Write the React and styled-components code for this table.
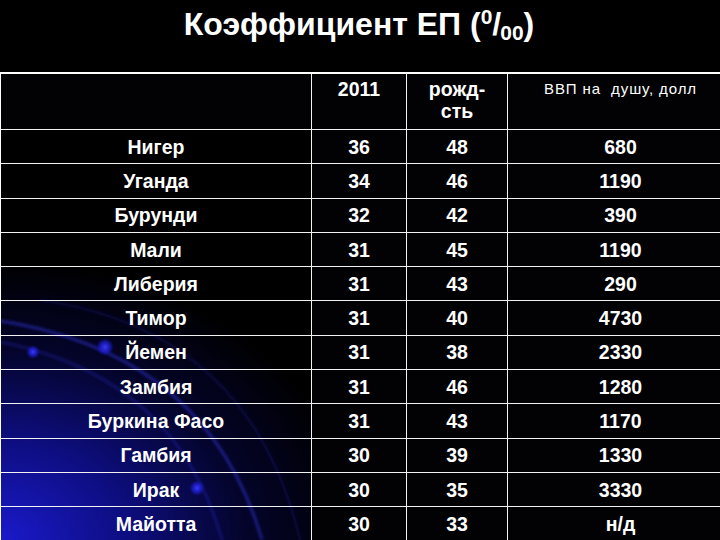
import React from 'react'
import styled, { createGlobalStyle } from 'styled-components'

const GlobalStyle = createGlobalStyle`
  html, body {
    margin: 0;
    padding: 0;
    background: #000;
  }
  body {
    font-family: "Liberation Sans", Arial, sans-serif;
    color: #fff;
  }
`

const Slide = styled.div`
  position: relative;
  width: 720px;
  height: 540px;
  overflow: hidden;
  background:
    radial-gradient(ellipse 360px 280px at 0% 100%, rgba(26, 26, 204, 1) 0%, rgba(16, 16, 152, 0.85) 35%, rgba(8, 8, 86, 0.5) 68%, rgba(0, 0, 0, 0) 100%),
    #000;
`

const Backdrop = styled.svg`
  position: absolute;
  left: 0;
  top: 0;
  width: 720px;
  height: 540px;
  pointer-events: none;
`

const Content = styled.div`
  position: relative;
  display: flex;
  flex-direction: column;
`

const Title = styled.h1`
  margin: 0;
  height: 72px;
  padding-top: 6px;
  box-sizing: border-box;
  text-align: center;
  font-size: 32px;
  font-weight: 700;
  line-height: 36px;
  padding-right: 2px;

  sup, sub {
    font-size: 21px;
    line-height: 0;
    position: relative;
    vertical-align: baseline;
  }
  sup {
    top: -11px;
  }
  sub {
    top: 5px;
    margin-left: -1px;
  }
`

const Grid = styled.div`
  display: grid;
  grid-template-columns: 311px 95px 101px 226px;
  grid-template-rows: 56px;
  grid-auto-rows: 34.3px;
  width: 733px;
  border-top: 2px solid #fff;
  border-left: 1px solid #fff;
`

const Cell = styled.div`
  box-sizing: border-box;
  border-right: 1px solid #f2f2f2;
  border-bottom: 1px solid #f2f2f2;
  display: flex;
  justify-content: center;
  align-items: ${({ $head }) => ($head ? 'flex-start' : 'center')};
  padding-top: ${({ $head }) => ($head ? '4px' : '0')};
  text-align: center;
  font-size: ${({ $small }) => ($small ? '15px' : '19.5px')};
  font-weight: ${({ $small }) => ($small ? 400 : 700)};
  letter-spacing: ${({ $small }) => ($small ? '0.9px' : '0')};
  line-height: 22px;
  white-space: pre;
  background: ${({ $dark }) => ($dark ? '#020204' : 'transparent')};
`

const rows = [
  ['Нигер', 36, 48, '680'],
  ['Уганда', 34, 46, '1190'],
  ['Бурунди', 32, 42, '390'],
  ['Мали', 31, 45, '1190'],
  ['Либерия', 31, 43, '290'],
  ['Тимор', 31, 40, '4730'],
  ['Йемен', 31, 38, '2330'],
  ['Замбия', 31, 46, '1280'],
  ['Буркина Фасо', 31, 43, '1170'],
  ['Гамбия', 30, 39, '1330'],
  ['Ирак', 30, 35, '3330'],
  ['Майотта', 30, 33, 'н/д'],
]

const Orbits = () => (
  <Backdrop viewBox="0 0 720 540">
    <defs>
      <filter id="glow" x="-50%" y="-50%" width="200%" height="200%">
        <feGaussianBlur stdDeviation="1.6" />
      </filter>
      <radialGradient id="dot">
        <stop offset="0%" stopColor="#3a3aff" stopOpacity="1" />
        <stop offset="60%" stopColor="#1c1cd0" stopOpacity="0.7" />
        <stop offset="100%" stopColor="#1010a0" stopOpacity="0" />
      </radialGradient>
    </defs>
    <g fill="none" filter="url(#glow)">
      <path d="M -20 318 Q 205 345 262 540" stroke="#3030dc" strokeOpacity="0.65" strokeWidth="2.4" />
      <path d="M -10 340 Q 175 372 222 540" stroke="#2a2ac4" strokeOpacity="0.55" strokeWidth="1.9" />
      <path d="M 40 300 Q 250 330 300 540" stroke="#2222b4" strokeOpacity="0.4" strokeWidth="1.6" />
    </g>
    <circle cx="33" cy="352" r="7" fill="url(#dot)" />
    <circle cx="105" cy="347" r="9" fill="url(#dot)" />
    <circle cx="197" cy="488" r="8" fill="url(#dot)" />
  </Backdrop>
)

export default function App() {
  return (
    <>
      <GlobalStyle />
      <Slide>
        <Orbits />
        <Content>
          <Title>
            Коэффициент ЕП (<sup>0</sup>/<sub>00</sub>)
          </Title>
          <Grid>
            <Cell $head $dark />
            <Cell $head $dark>2011</Cell>
            <Cell $head $dark>{'рожд-\nсть'}</Cell>
            <Cell $head $dark $small>{'ВВП на  душу, долл'}</Cell>
            {rows.map(([name, a, b, gdp]) => (
              <React.Fragment key={name}>
                <Cell>{name}</Cell>
                <Cell $dark>{a}</Cell>
                <Cell $dark>{b}</Cell>
                <Cell $dark>{gdp}</Cell>
              </React.Fragment>
            ))}
          </Grid>
        </Content>
      </Slide>
    </>
  )
}
